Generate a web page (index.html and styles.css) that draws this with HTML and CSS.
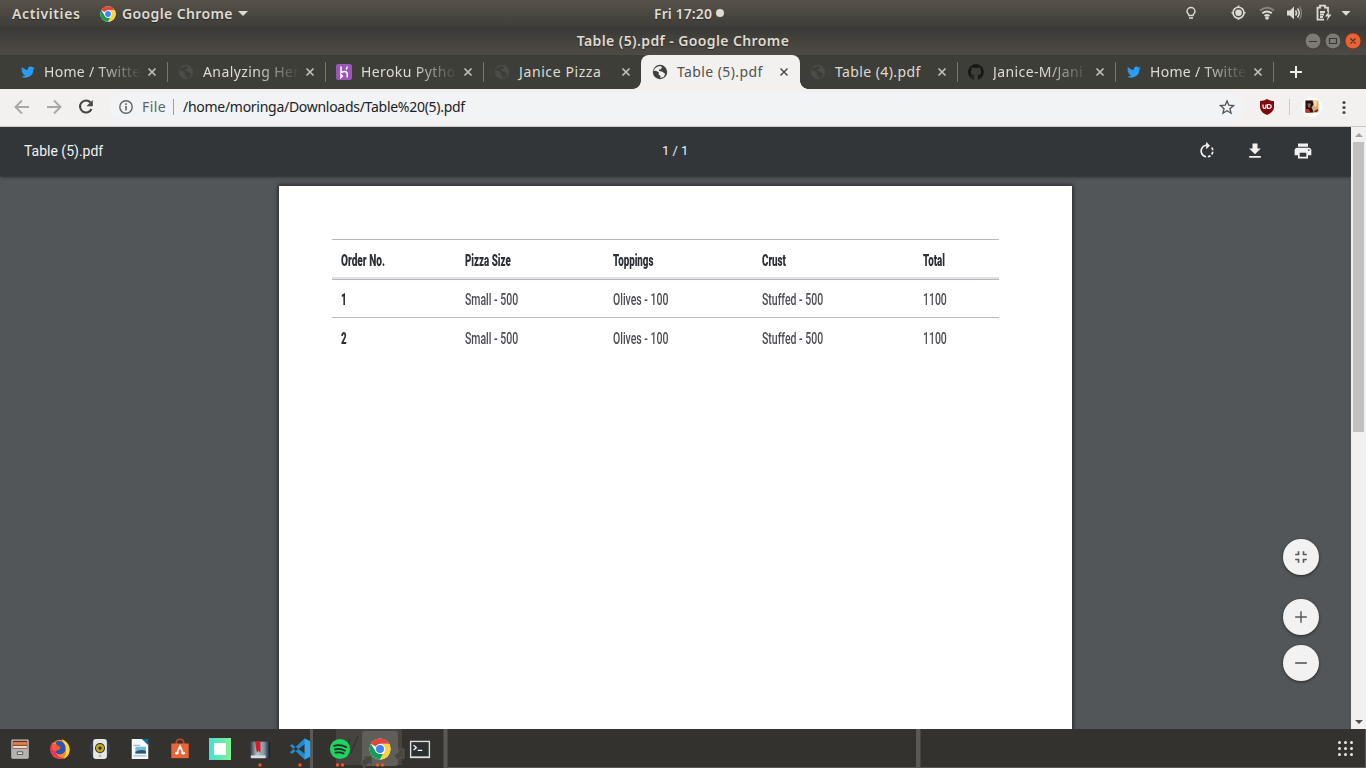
FILE: index.html
```html
<!DOCTYPE html>
<html lang="en">
<head>
<meta charset="utf-8">
<title>Table (5).pdf</title>
<link rel="stylesheet" href="styles.css">
</head>
<body>
<svg width="0" height="0" class="defs">
  <defs>
    <symbol id="twitter" viewBox="0 0 24 24"><path d="M23.6 4.9c-.8.4-1.800.6-2.700.8 1-.6 1.700-1.500 2.100-2.600-.9.500-1.900.9-3 1.100a4.800 4.800 0 0 0-8.200 4.400C7.800 8.400 4.200 6.500 1.700 3.500a4.800 4.800 0 0 0 1.500 6.400c-.8 0-1.500-.2-2.200-.6 0 2.300 1.600 4.300 3.900 4.800-.7.2-1.400.2-2.100.1.600 1.900 2.400 3.300 4.500 3.300A9.600 9.600 0 0 1 .2 19.500 13.600 13.600 0 0 0 21.200 7.400c.9-.7 1.800-1.500 2.400-2.500z" fill="#2b9bf5"/></symbol>
    <symbol id="globe" viewBox="0 0 16 16"><circle cx="8" cy="8" r="7.200" fill="currentColor"/><path d="M5.800 2.500 8.500 2l1.500 1.300-1.100 1.900-2 .4.200 1.300 3.400.8 2.700 2.300-1.500 3.100-3.500 1 .4-2-2-1.500.2-2.300-2.800-1.500-2.500.2A6.500 6.500 0 0 1 5.800 2.500z" class="land"/></symbol>
    <symbol id="close" viewBox="0 0 10 10"><path d="M1.500 1.500l7 7m0-7l-7 7" stroke="currentColor" stroke-width="1.600"/></symbol>
    <symbol id="chrome" viewBox="0 0 24 24"><circle cx="12" cy="12" r="11.500" fill="#fff"/><path d="M12 12 2 6.300A11.500 11.500 0 0 1 22 6.300H12z" fill="#e2453a"/><path d="M12 6.500H22.100A11.500 11.500 0 0 1 12 23.500L17 14.800z" fill="#fdd23e"/><path d="M2 6.300 7.200 14.800 12 17.500h3.200L11.800 23.500A11.500 11.500 0 0 1 2 6.300z" fill="#149c59"/><circle cx="12" cy="12" r="5.500" fill="#fff"/><circle cx="12" cy="12" r="4.400" fill="#4384f4"/></symbol>
  </defs>
</svg>

<header class="topbar">
  <span class="activities">Activities</span>
  <svg class="app-icon" width="16" height="16"><use href="#chrome"/></svg>
  <span class="app-name">Google Chrome</span>
  <i class="caret"></i>
  <span class="clock">Fri 17:20</span><i class="dot"></i>
  <svg class="tray" width="180" height="27" viewBox="0 0 180 27" fill="none" stroke="#dfdbd2">
    <path d="M10 15.500C10 14 8 13.500 8 11.500a4 4 0 1 1 8 0c0 2-2 2.500-2 4zM10 18h4" stroke-width="1.400"/>
    <circle cx="59.500" cy="12.800" r="5.500" stroke-width="1.600"/><circle cx="59.500" cy="12.800" r="3.300" fill="#dfdbd2" stroke="none"/><path d="M59.500 5.500v2M59.500 18v2M52.500 12.800h2M64.500 12.800h2" stroke-width="1.600"/>
    <path d="M81 10.500q7-5.500 14 0" stroke="#85827a" stroke-width="2"/><path d="M83.300 13.200q4.700-3.500 9.400 0M85.500 16q2.500-2 5 0" stroke-width="1.900"/><circle cx="88" cy="18" r="1.800" fill="#dfdbd2" stroke="none"/>
    <path d="M108 10.500h3l4-4v13l-4-4h-3z" fill="#dfdbd2" stroke="none"/><path d="M116.500 10.500q2 2.500 0 5M118.500 8.500q3.500 4.500 0 9" stroke-width="1.500"/><path d="M120.500 6.500q4 6.500 0 13" stroke="#85827a" stroke-width="1.300"/>
    <path d="M145 19.700h-6.500v-12h2.500v-2h5v2h3v4M141 12h5M141 14.500h4M141 17h3" stroke-width="1.800"/><path d="M150.500 10.500l-4.500 6h3l-1.500 4.500 5-6.500h-3z" fill="#dfdbd2" stroke="none"/>
    <path d="M162.500 11h9l-4.500 4.700z" fill="#dfdbd2" stroke="none"/>
  </svg>
</header>

<div class="titlebar">
  <span class="window-title">Table (5).pdf - Google Chrome</span>
  <svg class="controls" width="58" height="18" viewBox="0 0 58 18">
    <circle cx="9" cy="9" r="7.900" fill="#7d7b74" stroke="#35342f" stroke-width=".7"/><circle cx="29" cy="9" r="7.900" fill="#7d7b74" stroke="#35342f" stroke-width=".7"/><circle cx="49" cy="9" r="7.900" fill="#ec6236" stroke="#6b321e" stroke-width=".7"/>
    <path d="M5 9.500h8M25.500 6.500h7v5h-7zM46.500 6.500l5 5m0-5l-5 5" fill="none" stroke="#393832" stroke-width="1.200"/>
  </svg>
</div>

<nav class="tabs">
  <div class="tab"><svg class="fav bird"><use href="#twitter"/></svg><span class="label fade">Home / Twitte</span><svg class="x"><use href="#close"/></svg></div>
  <div class="tab"><svg class="fav dim"><use href="#globe"/></svg><span class="label fade">Analyzing Her</span><svg class="x"><use href="#close"/></svg></div>
  <div class="tab"><svg class="fav" viewBox="0 0 16 16"><rect width="16" height="16" rx="2" fill="#9b57b5"/><path d="M5 2.500v6q3.500-1.500 5.500-.5.700.5.700 1.500v4M5 10.500v3l1.500-1.500zM11.200 2.500q0 1.800-1.200 3" stroke="#fff" stroke-width="1.500" fill="none"/></svg><span class="label fade">Heroku Pytho</span><svg class="x"><use href="#close"/></svg></div>
  <div class="tab nosep"><svg class="fav dim"><use href="#globe"/></svg><span class="label">Janice Pizza</span><svg class="x"><use href="#close"/></svg></div>
  <div class="tab active"><svg class="fav"><use href="#globe"/></svg><span class="label">Table (5).pdf</span><svg class="x"><use href="#close"/></svg></div>
  <div class="tab"><svg class="fav dim"><use href="#globe"/></svg><span class="label">Table (4).pdf</span><svg class="x"><use href="#close"/></svg></div>
  <div class="tab"><svg class="fav" viewBox="0 0 16 16"><path fill="#171715" d="M8 0a8 8 0 0 0-2.500 15.600c.4.100.5-.2.500-.4v-1.500c-2.200.5-2.700-.9-2.700-.9-.4-.9-.9-1.200-.9-1.200-.7-.5.100-.5.100-.5.800.1 1.200.8 1.200.8.700 1.300 1.900.9 2.300.7.100-.5.300-.9.500-1.100-1.800-.2-3.600-.9-3.600-4 0-.9.300-1.600.8-2.100-.1-.2-.4-1 .1-2.100 0 0 .7-.2 2.200.8a7.600 7.600 0 0 1 4 0c1.500-1 2.200-.8 2.200-.8.400 1.100.200 1.900.1 2.100.5.600.8 1.300.8 2.100 0 3.100-1.900 3.700-3.700 3.900.3.300.6.800.6 1.500v2.200c0 .2.100.5.600.4A8 8 0 0 0 8 0z"/></svg><span class="label fade">Janice-M/Jani</span><svg class="x"><use href="#close"/></svg></div>
  <div class="tab"><svg class="fav bird"><use href="#twitter"/></svg><span class="label fade">Home / Twitte</span><svg class="x"><use href="#close"/></svg></div>
  <svg class="new-tab" width="12" height="12" viewBox="0 0 12 12"><path d="M6 0v12M0 6h12" stroke="#eeece7" stroke-width="2"/></svg>
</nav>

<div class="toolbar">
  <svg class="nav-icons" width="94" height="36" viewBox="0 0 94 36" fill="none" stroke-width="1.900">
    <path d="M29 18H16M22 11.500 15.500 18l6.500 6.500M47 18h13M54 11.500l6.500 6.500-6.500 6.500" stroke="#aaa8a6"/>
    <path d="M90.500 13.500a6 6 0 1 0 1 6.500" stroke="#454545" stroke-width="2.100"/><path d="M92.800 11v6.300h-6.300z" fill="#454545"/>
  </svg>
  <div class="omnibox">
    <svg class="info" width="14" height="14" viewBox="0 0 14 14"><circle cx="7" cy="7" r="6.200" fill="none" stroke="#5f6368" stroke-width="1.400"/><path d="M7 6v4.500M7 3.300v1.600" stroke="#5f6368" stroke-width="1.600"/></svg>
    <span class="scheme">File</span><i class="bar"></i><span class="url">/home/moringa/Downloads/Table%20(5).pdf</span>
    <svg class="star" width="16" height="16" viewBox="0 0 24 24"><path d="M12 2.800l2.700 6.500 7 .6-5.300 4.600 1.600 6.800-6-3.600-6 3.600 1.600-6.800L2.300 9.900l7-.6z" fill="none" stroke="#505358" stroke-width="2"/></svg>
  </div>
  <svg class="ublock" width="14" height="16" viewBox="0 0 14 16"><path d="M7 0q3 2 7 2v6q0 5-7 8-7-3-7-8V2q4 0 7-2z" fill="#800610"/><path d="M3 5.500v2.200q0 1.600 1.500 1.600T6 7.700V5.500M7.500 5.500v3.800h1.700q2-.2 2-1.900t-2-1.900z" fill="none" stroke="#fff" stroke-width="1.200"/></svg>
  <i class="split"></i>
  <svg class="avatar" width="20" height="20" viewBox="0 0 20 20"><circle cx="10" cy="10" r="10" fill="#fff"/><path d="M3.500 3.500h13v12h-13z" fill="#e0a873"/><path d="M3.500 3.500h7l1 4-2 3 1 2 1 3h-8z" fill="#1c1517"/><path d="M5.500 6.500h3.500l-1 4.500-2-1z" fill="#a05a42"/><path d="M4 12h3l1.500 3.500H4z" fill="#d52a20"/><path d="M11.500 4h4l-1 5-2 1z" fill="#f8d7a0"/><path d="M12 14l4-2v2l-3 1.500z" fill="#573022"/></svg>
  <svg class="menu" width="4" height="16" viewBox="0 0 4 16" fill="#48494b"><circle cx="2" cy="3.500" r="1.600"/><circle cx="2" cy="8.500" r="1.600"/><circle cx="2" cy="13.500" r="1.600"/></svg>
</div>

<main class="viewer">
  <section class="pdf">
    <div class="pdf-bar">
      <span class="pdf-name">Table (5).pdf</span>
      <span class="pages">1 / 1</span>
      <div class="pdf-actions">
        <svg viewBox="0 0 24 24"><path d="M15.550 5.550 11 1v3.070C7.060 4.560 4 7.920 4 12s3.050 7.440 7 7.930v-2.020c-2.840-.48-5-2.940-5-5.910s2.160-5.430 5-5.910V10l4.550-4.450zM19.930 11c-.17-1.390-.72-2.730-1.620-3.890l-1.420 1.420c.54.750.88 1.600 1.020 2.470h2.020zM13 17.900v2.020c1.390-.17 2.740-.71 3.900-1.610l-1.440-1.440c-.75.540-1.590.890-2.460 1.030zm3.890-2.420 1.420 1.410c.9-1.160 1.450-2.500 1.620-3.890h-2.020c-.14.870-.48 1.720-1.020 2.480z"/></svg>
        <svg viewBox="0 0 24 24"><path d="M19 9h-4V3H9v6H5l7 7 7-7zM5 18v2h14v-2H5z"/></svg>
        <svg viewBox="0 0 24 24"><path d="M19 8H5c-1.660 0-3 1.340-3 3v6h4v4h12v-4h4v-6c0-1.660-1.340-3-3-3zm-3 11H8v-5h8v5zm3-7c-.55 0-1-.45-1-1s.45-1 1-1 1 .45 1 1-.45 1-1 1zm-1-9H6v4h12V3z"/></svg>
      </div>
    </div>
    <article class="page">
      <table>
        <thead><tr><th><b>Order No.</b></th><th><b>Pizza Size</b></th><th><b>Toppings</b></th><th><b>Crust</b></th><th><b>Total</b></th></tr></thead>
        <tbody>
          <tr><th><b>1</b></th><td><span>Small - 500</span></td><td><span>Olives - 100</span></td><td><span>Stuffed - 500</span></td><td><span>1100</span></td></tr>
          <tr><th><b>2</b></th><td><span>Small - 500</span></td><td><span>Olives - 100</span></td><td><span>Stuffed - 500</span></td><td><span>1100</span></td></tr>
        </tbody>
      </table>
    </article>
    <div class="zoom-buttons">
      <button class="fit"><svg viewBox="0 0 24 24"><path d="M5 16h3v3h2v-5H5v2zm3-8H5v2h5V5H8v3zm6 11h2v-3h3v-2h-5v5zm2-11V5h-2v5h5V8h-3z"/></svg></button>
      <button><svg viewBox="0 0 24 24"><path d="M19 12.900h-6.100V19h-1.800v-6.100H5v-1.800h6.100V5h1.800v6.100H19z"/></svg></button>
      <button><svg viewBox="0 0 24 24"><path d="M19 13H5v-2h14v2z"/></svg></button>
    </div>
  </section>
  <aside class="scrollbar"><i class="up"></i><i class="thumb"></i><i class="down"></i></aside>
</main>

<footer class="dock">
  <svg class="ghosts" width="1366" height="39" viewBox="0 0 1366 39">
    <path d="M310 0h3v39h-3zM443.500 0h4v39h-4zM916 0h4.500v39H916zM448 38h918v1H448zM1365 0h1v39h-1z" fill="#5b5953"/>
    <path d="M336 0h66v36h-66z" fill="#45443f"/><rect x="362" y="2" width="36" height="35" rx="3" fill="#605e58"/>
    <path d="M350 10l-5 12M358 7l-7 17" stroke="#35342f" stroke-width="1.500" fill="none"/>
    <path d="M361 33l4-4-3-2h10v10l-3-3-5 5zM394 26l5-3-2-3h7v10l-3-2-4 3z" fill="#47463f" stroke="#6a6860" stroke-width=".6"/>
  </svg>
  <div class="apps">
    <svg viewBox="0 0 24 24"><rect x="2.500" y="1.500" width="19" height="21" rx="1.500" fill="#c5c2be"/><path d="M4 3h16v9H4z" fill="#5a3425"/><path d="M4.500 4.500h15v3h-15z" fill="#e77d45"/><path d="M4.500 8.500h15v2.500h-15z" fill="#f2d9c5"/><path d="M3 11.500h18v10H3z" fill="#b4b2af"/><path d="M9 15h6v3H9z" fill="#ddd" stroke="#555"/></svg>
    <svg viewBox="0 0 24 24"><circle cx="12" cy="12.500" r="10.500" fill="#ff8b20"/><path d="M14 1q9 4 8.500 13-1 7-7 9 5-6 2-14z" fill="#ffd52d"/><path d="M2 7q-2 8 3 13 5 4 11 2-8-1-9-8z" fill="#f4315f"/><path d="M7 4q8-3 11 5 1 8-6 9-6-1-5-5 4 1 5-2l-3-1z" fill="#2a55b4"/><path d="M3 4q1 3 5 3l5 3-3 2-3 3q-5-3-4-11z" fill="#ff5737"/></svg>
    <svg viewBox="0 0 24 24"><circle cx="12" cy="12" r="10" fill="none" stroke="#34465c" stroke-width="2"/><rect x="4.500" y="1" width="15" height="22" rx="3" fill="#e7e7e5"/><circle cx="12" cy="11" r="5.500" fill="#34332d"/><circle cx="12" cy="11" r="4.500" fill="#c4a61b"/><circle cx="12" cy="11" r="1.700" fill="#222"/><circle cx="12" cy="19.500" r="1.500" fill="#b7b7b5"/></svg>
    <svg viewBox="0 0 24 24"><path d="M3 1h12l6 6v16H3z" fill="#f5f8fa"/><path d="M14 1h7v7z" fill="#0d6f9e"/><path d="M5 8h7M5 19.500h14" stroke="#77a8c4"/><path d="M7 9.500h11.500v7.500H7z" fill="#77b9df"/><path d="M7 15q5-3 11.500-1v3H7z" fill="#33546b"/></svg>
    <svg viewBox="0 0 24 24"><path d="M8 7V5q0-3.500 4-3.500T16 5v2" fill="none" stroke="#b94828" stroke-width="2"/><path d="M2.500 6h19v16h-19z" fill="#ea6438"/><path d="M8 18l4-9 4 9M6.500 16.500h4M13.500 16.500h4" fill="none" stroke="#fff" stroke-width="2"/></svg>
    <svg viewBox="0 0 24 24"><defs><linearGradient id="mint"><stop stop-color="#43dfd7"/><stop offset="1" stop-color="#83f08e"/></linearGradient></defs><path d="M0 0h24v24H0z" fill="url(#mint)"/><path d="M5.500 5.500h13v13h-13z" fill="#fff"/></svg>
    <svg viewBox="0 0 24 24"><defs><linearGradient id="book"><stop stop-color="#2c3237"/><stop offset=".35" stop-color="#b9c4c9"/><stop offset=".7" stop-color="#7d98a8"/><stop offset="1" stop-color="#10181c"/></linearGradient></defs><path d="M1 4h22v18H1z" fill="url(#book)"/><path d="M2 19h16v3H2z" fill="#d7dfe2"/><path d="M6.500 3.500h6V16l-2-2-2 2z" fill="#d91923"/></svg>
    <svg viewBox="0 0 24 24"><path d="M17.500 6.500v11L3 6.500 1 8.500l16 15 6-3V3.500l-6-3-16 15 2 2z" fill="#218bd1" fill-rule="evenodd"/><path d="M17 .5l6 3v17l-6 3z" fill="#35a6ed"/></svg>
    <svg viewBox="0 0 24 24"><circle cx="12" cy="12" r="11" fill="#1ed45f"/><path d="M5.500 8.500q7-2 13.500 1.500M6.500 12.500q6-1.500 11 1.300M7 16q5-1.200 9 1" fill="none" stroke="#202b20" stroke-width="1.900" stroke-linecap="round"/></svg>
    <svg viewBox="0 0 24 24"><use href="#chrome"/></svg>
    <svg viewBox="0 0 24 24"><path d="M1 3h22v19H1z" fill="#dedfdd"/><path d="M2.500 4.500h19v15.500h-19z" fill="#2c3033"/><path d="M5 8l3 2.500L5 13M9.500 13.500h5" fill="none" stroke="#fff" stroke-width="1.400"/></svg>
  </div>
  <svg class="marks" width="400" height="4" fill="#f05423"><circle cx="260" cy="2" r="1.700"/><circle cx="300" cy="2" r="1.700"/><circle cx="337.500" cy="2" r="1.700"/><circle cx="342.500" cy="2" r="1.700"/><circle cx="377.500" cy="2" r="1.700"/><circle cx="382.500" cy="2" r="1.700"/></svg>
  <div class="grid"><i></i><i></i><i></i><i></i><i></i><i></i><i></i><i></i><i></i></div>
</footer>
</body>
</html>
```
FILE: styles.css
```css
* { box-sizing: border-box; }
body { margin: 0; width: 1366px; height: 768px; overflow: hidden; display: flex; flex-direction: column; font: 14px "Noto Sans", sans-serif; }
svg { display: block; flex: none; }
.defs { position: absolute; }
.topbar { height: 27px; flex: none; display: flex; align-items: center; background: linear-gradient(#575249, #3e3d38); color: #dfdbd2; font-weight: 600; padding-left: 12px; text-shadow: 0 1px 1px rgba(0,0,0,.4); }
.activities { width: 88px; letter-spacing: .6px; }
.app-name { margin-left: 6px; width: 113px; white-space: nowrap; letter-spacing: .38px; }
.caret { border: 5px solid transparent; border-top-color: #dfdbd2; border-bottom: 0; margin-left: 3px; }
.clock { margin-left: 406px; width: 59px; white-space: nowrap; letter-spacing: .1px; padding-bottom: 1px; }
.dot { width: 8px; height: 8px; border-radius: 50%; background: #dfdbd2; margin: 0 0 1px 3px; }
.tray { margin-left: auto; margin-right: 7px; }
.titlebar { position: relative; height: 28px; flex: none; background: linear-gradient(#3a3935, #4f4b44); display: flex; align-items: center; justify-content: center; color: #dfdbd2; font-weight: 600; letter-spacing: .4px; padding-bottom: 2px; text-shadow: 0 1px 1px rgba(0,0,0,.4); }
.controls { position: absolute; right: 4px; top: 5px; }
.tabs { height: 34px; flex: none; background: #3e3e38; display: flex; align-items: stretch; padding-left: 9px; }
.tab { width: 158px; flex: none; position: relative; display: flex; align-items: center; color: #dedbd3; padding-left: 11px; }
.tab::after { content: ""; position: absolute; right: -1px; top: 7px; width: 1px; height: 20px; background: #77766f; }
.tab.active::after, .tab.nosep::after { display: none; }
.fav { width: 16px; height: 16px; color: #3f4040; margin-right: 9px; }
.bird { width: 14px; height: 14px; margin: 0 10px 0 1px; }
.dim { color: #4c4c4b; --land: #3e3e38; }
.land { fill: var(--land, #f2f1ef); }
.label { width: 95px; white-space: nowrap; letter-spacing: .4px; padding-bottom: 1px; }
.bird + .label { letter-spacing: .3px; margin-left: -1px; width: 96px; }
.nosep .label { letter-spacing: .6px; }
.fade { -webkit-mask-image: linear-gradient(90deg, #000 55%, transparent 102%); }
.x { width: 10px; height: 10px; margin-left: 7px; color: #c4c2bc; }
.active { background: #f2f1ef; color: #53524f; border-radius: 8px 8px 0 0; width: 159px; margin-right: -1px; z-index: 1; }
.active::before { content: ""; position: absolute; left: -8px; right: -8px; bottom: 0; height: 8px; background: radial-gradient(circle at 0 0, transparent 7.5px, #f2f1ef 8px) left / 8px 8px no-repeat, radial-gradient(circle at 100% 0, transparent 7.5px, #f2f1ef 8px) right / 8px 8px no-repeat; }
.active .x { color: #55534f; }
.new-tab { margin: 11px 0 0 17px; }
.toolbar { height: 38px; flex: none; background: #f2f1ef; border-bottom: 1px solid #cbcac8; display: flex; align-items: center; padding-bottom: 1px; }
.omnibox { margin-left: 15px; width: 1136px; height: 28px; border-radius: 14px; background: #f1f3f5; display: flex; align-items: center; padding: 0 10px; color: #202124; }
.scheme { margin-left: 9px; color: #5f6368; width: 31px; letter-spacing: .4px; padding-bottom: 1px; }
.bar { width: 1px; height: 16px; background: #9aa0a6; margin-right: 9px; }
.url { white-space: nowrap; letter-spacing: -.28px; padding-bottom: 1px; }
.star { margin-left: auto; }
.ublock { margin-left: 15px; }
.split { width: 1px; height: 16px; background: #cdccca; margin-left: 15px; }
.avatar { margin-left: 12px; }
.menu { margin-left: 20px; }
.viewer { flex: 1; display: flex; min-height: 0; }
.pdf { position: relative; width: 1351px; background: #525659; overflow: hidden; }
.pdf-bar { position: relative; z-index: 2; height: 49px; background: #323639; color: #f1f1f1; box-shadow: 0 1px 3px rgba(0,0,0,.5); display: flex; align-items: center; padding: 0 38px 2px 24px; font: 14px Roboto, sans-serif; }
.pdf-name { width: 638px; }
.pages { font-size: 13px; }
.pdf-actions { margin-left: auto; display: flex; gap: 28px; }
.pdf-actions svg { width: 20px; height: 20px; fill: #f1f1f1; }
.page { width: 793px; height: 600px; margin: 10px 0 0 279px; background: #fff; box-shadow: 0 0 4px 1px rgba(0,0,0,.55); padding: 53px 73px 0 53px; }
table { width: 667px; table-layout: fixed; border-collapse: separate; border-spacing: 0; font: 500 16px/18px Roboto, sans-serif; color: #4c4d51; }
th, td { height: 39px; padding: 3px 0 0 9px; text-align: left; border-top: 1px solid #b9b9b9; white-space: nowrap; vertical-align: middle; }
thead th { height: 40px; padding-top: 5px; border-bottom: 2px solid #dee2e6; }
tbody tr:first-child > * { height: 38px; padding-top: 2px; }
tr > :nth-child(1) { width: 124px; }
tr > :nth-child(2) { width: 148px; }
tr > :nth-child(3) { width: 149px; }
tr > :nth-child(4) { width: 161px; }
tr > :nth-child(5) { width: 85px; }
th { color: #2c3034; }
td span, th b { display: inline-block; transform: scaleX(.655); transform-origin: left; }
th b { transform: scaleX(.61); }
thead th:first-child b { transform: scaleX(.63); }
.zoom-buttons { position: absolute; right: 32px; top: 412px; z-index: 2; display: flex; flex-direction: column; gap: 10px; }
.zoom-buttons button { width: 36px; height: 36px; border: 0; border-radius: 50%; background: #f2f2f2; box-shadow: 0 1px 3px rgba(0,0,0,.5); padding: 8px; }
.zoom-buttons svg { width: 20px; height: 20px; fill: #5b5b5b; }
.zoom-buttons .fit { margin-bottom: 14px; }
.scrollbar { width: 15px; background: #f1f1f1; display: flex; flex-direction: column; align-items: center; padding: 6px 0 5px; }
.up { border: 4px solid transparent; border-bottom-color: #a3a3a3; border-top: 0; }
.thumb { width: 11px; height: 290px; background: #c1c1c1; margin-top: 5px; }
.down { margin-top: auto; border: 4px solid transparent; border-top-color: #505050; border-bottom: 0; }
.dock { position: relative; height: 39px; flex: none; background: #33322e; display: flex; align-items: center; }
.ghosts { position: absolute; left: 0; top: 0; }
.apps { position: relative; display: flex; gap: 18px; padding-left: 9px; }
.apps svg { width: 22px; height: 22px; }
.marks { position: absolute; left: 0; bottom: 1px; }
.grid { position: relative; margin-left: auto; margin-right: 13px; display: grid; grid-template-columns: repeat(3, 3px); gap: 3px; }
.grid i { width: 3px; height: 3px; border-radius: 50%; background: #e8e8e6; }
```
